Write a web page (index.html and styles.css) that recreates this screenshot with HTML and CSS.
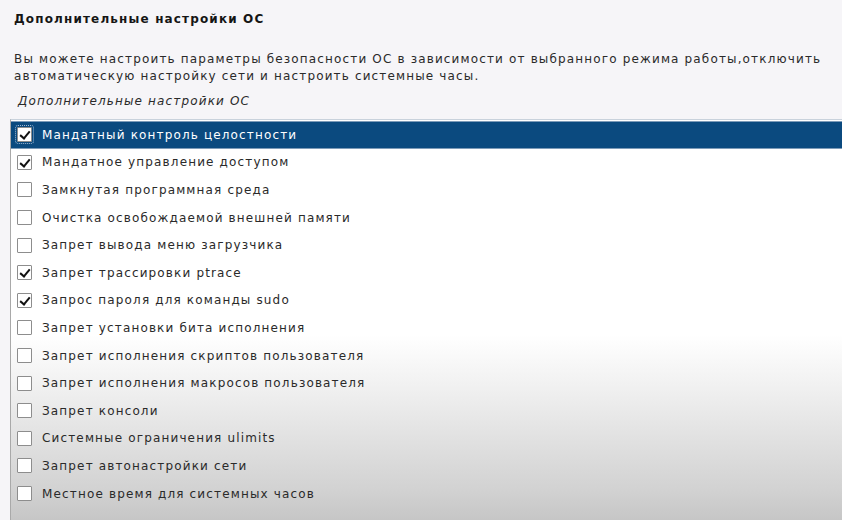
FILE: index.html
```html
<!DOCTYPE html>
<html lang="ru">
<head>
<meta charset="utf-8">
<link rel="stylesheet" href="styles.css">
</head>
<body>
<div class="page">
  <h1 class="title">Дополнительные настройки ОС</h1>
  <p class="desc">Вы можете настроить параметры безопасности ОС в зависимости от выбранного режима работы,отключить автоматическую настройку сети и настроить системные часы.</p>
  <div class="label">Дополнительные настройки ОС</div>
  <ul class="list">
    <li class="row selected"><span class="box checked focus"></span><span class="text">Мандатный контроль целостности</span></li>
    <li class="row"><span class="box checked"></span><span class="text">Мандатное управление доступом</span></li>
    <li class="row"><span class="box"></span><span class="text">Замкнутая программная среда</span></li>
    <li class="row"><span class="box"></span><span class="text">Очистка освобождаемой внешней памяти</span></li>
    <li class="row"><span class="box"></span><span class="text">Запрет вывода меню загрузчика</span></li>
    <li class="row"><span class="box checked"></span><span class="text">Запрет трассировки ptrace</span></li>
    <li class="row"><span class="box checked"></span><span class="text">Запрос пароля для команды sudo</span></li>
    <li class="row"><span class="box"></span><span class="text">Запрет установки бита исполнения</span></li>
    <li class="row"><span class="box"></span><span class="text">Запрет исполнения скриптов пользователя</span></li>
    <li class="row"><span class="box"></span><span class="text">Запрет исполнения макросов пользователя</span></li>
    <li class="row"><span class="box"></span><span class="text">Запрет консоли</span></li>
    <li class="row"><span class="box"></span><span class="text">Системные ограничения ulimits</span></li>
    <li class="row"><span class="box"></span><span class="text">Запрет автонастройки сети</span></li>
    <li class="row"><span class="box"></span><span class="text">Местное время для системных часов</span></li>
  </ul>
</div>
</body>
</html>
```
FILE: styles.css
```css
html, body {
  margin: 0;
  padding: 0;
  width: 842px;
  height: 520px;
  overflow: hidden;
  background: #f6f5f8;
}
.page {
  font-family: "DejaVu Sans", sans-serif;
  color: #2a2a2a;
  font-size: 12px;
  letter-spacing: 1.15px;
  display: flex;
  flex-direction: column;
  height: 520px;
}
.title {
  margin: 10px 0 0 14px;
  font-size: 12px;
  font-weight: bold;
  line-height: 18px;
  color: #151515;
}
.desc {
  margin: 23px 10px 0 14px;
  line-height: 17px;
}
.label {
  margin: 8px 0 0 18px;
  font-style: italic;
  line-height: 17px;
}
.list {
  list-style: none;
  margin: 0 0 0 10px;
  margin-top: 9px;
  padding: 1px 0 0 0;
  flex: 1;
  border-left: 1px solid #a9a9a9;
  border-top: 1px solid #c9d2dc;
  background: linear-gradient(to bottom, #ffffff 0px, #ffffff 215px, #f1f1f1 265px, #d2d2d2 370px, #c6c6c6 400px);
}
.row {
  display: flex;
  align-items: center;
  box-sizing: border-box;
  height: 27.6px;
  padding-left: 6px;
  gap: 10px;
}
.row.selected {
  background: #0b4a7f;
  color: #ffffff;
  border-top: 1px solid #7d9bb8;
  border-bottom: 1px solid #7d9bb8;
}
.box {
  width: 15px;
  height: 15px;
  border: 1px solid #8d8d8d;
  border-radius: 1px;
  background: #ffffff;
  box-sizing: border-box;
  position: relative;
  flex: none;
}
.box.checked::after {
  content: "";
  position: absolute;
  left: 4px;
  top: 1px;
  width: 4px;
  height: 8px;
  border-right: 2px solid #111;
  border-bottom: 2px solid #111;
  transform: rotate(40deg);
}
.box.focus {
  outline: 1px dotted #9fb9d4;
  outline-offset: 1px;
}
```
